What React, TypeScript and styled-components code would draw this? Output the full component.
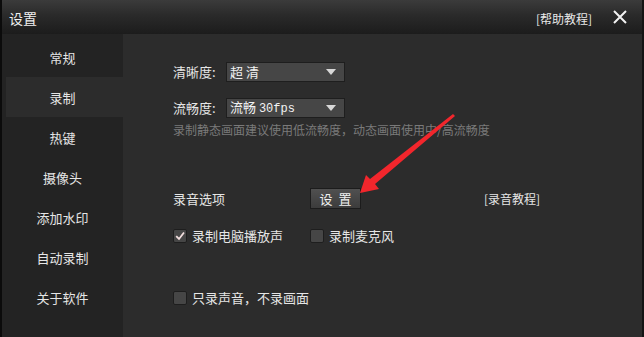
import React from "react";
import styled, { createGlobalStyle } from "styled-components";

const Global = createGlobalStyle`
  html, body { margin: 0; padding: 0; background: #1a1a1a; }
  body { font-family: "Noto Sans CJK SC", "Microsoft YaHei", sans-serif; }
`;

const Window = styled.div`
  position: relative;
  width: 644px;
  height: 337px;
  box-sizing: border-box;
  border-left: 2px solid #0b0b0b;
  border-right: 2px solid #141414;
  display: flex;
  flex-direction: column;
  overflow: hidden;
  background: #2c2c2c;
`;

const TitleBar = styled.div`
  height: 34px;
  flex: none;
  display: flex;
  align-items: center;
  padding: 0 0 0 7px;
  background: linear-gradient(#3b3b3b, #2a2a2a 45%, #1c1c1c);
  color: #f0f0f0;
  font-size: 14px;
`;

const Title = styled.div`
  flex: 1;
  padding-top: 2px;
`;

const HelpLink = styled.div`
  font-size: 12px;
  color: #e8e8e8;
  margin-right: 20px;
  padding-top: 2px;
`;

const Close = styled.div`
  width: 16px;
  height: 16px;
  margin-right: 14px;
  display: flex;
  align-items: center;
  justify-content: center;
`;

const Body = styled.div`
  flex: 1;
  display: flex;
`;

const Sidebar = styled.div`
  width: 121px;
  flex: none;
  background: #232323;
  padding-top: 3px;
  display: flex;
  flex-direction: column;
`;

const NavItem = styled.div<{ $active?: boolean }>`
  height: 40px;
  margin-left: 4px;
  display: flex;
  align-items: center;
  justify-content: center;
  padding-right: 4px;
  font-size: 13px;
  color: #e6e6e6;
  background: ${(p) => (p.$active ? "#2c2c2c" : "transparent")};
`;

const Content = styled.div`
  flex: 1;
  background: #2c2c2c;
  padding: 28px 0 0 50px;
  display: flex;
  flex-direction: column;
  font-size: 13px;
  line-height: 16px;
  color: #e6e6e6;
`;

const Row = styled.div<{ $mt?: number }>`
  display: flex;
  align-items: center;
  margin-top: ${(p) => p.$mt ?? 0}px;
`;

const Label = styled.div<{ $w?: number }>`
  width: ${(p) => (p.$w ? `${p.$w}px` : "auto")};
  flex: none;
`;

const TutorialLink = styled.div`
  margin-left: 123px;
  font-size: 12px;
`;

const Select = styled.div`
  width: 119px;
  height: 20px;
  box-sizing: border-box;
  background: #464646;
  border: 1px solid #1e1e1e;
  display: flex;
  align-items: center;
  padding: 0 8px 0 3px;
  color: #f2f2f2;
  font-size: 13px;
`;

const SelectText = styled.div`
  flex: 1;
  white-space: pre;
`;

const Mono = styled.span`
  font-family: "Liberation Mono", "DejaVu Sans Mono", monospace;
  font-size: 12px;
`;

const Caret = styled.div`
  width: 0;
  height: 0;
  border-left: 5px solid transparent;
  border-right: 5px solid transparent;
  border-top: 6px solid #d8d8d8;
`;

const Hint = styled.div`
  margin-top: 4px;
  font-size: 12px;
  color: #7a7a7a;
  line-height: 16px;
`;

const Button = styled.div`
  width: 51px;
  height: 21px;
  box-sizing: border-box;
  border: 1px solid #1c1c1c;
  background: linear-gradient(#505050, #3c3c3c);
  color: #f0f0f0;
  display: flex;
  align-items: center;
  justify-content: center;
  font-size: 13px;
  letter-spacing: 6px;
  padding-left: 6px;
`;

const Box = styled.div`
  width: 14px;
  height: 14px;
  box-sizing: border-box;
  border: 1px solid #1e1e1e;
  border-radius: 2px;
  background: #464646;
  margin-right: 5px;
  display: flex;
  align-items: center;
  justify-content: center;
  flex: none;
`;

const Check = styled.div<{ $w?: number }>`
  display: flex;
  align-items: center;
  width: ${(p) => (p.$w ? `${p.$w}px` : "auto")};
`;

const ArrowLayer = styled.svg`
  position: absolute;
  left: 0;
  top: 0;
  pointer-events: none;
`;

const CheckBox = ({ checked, label, w }: { checked?: boolean; label: string; w?: number }) => (
  <Check $w={w}>
    <Box>
      {checked && (
        <svg width="10" height="10" viewBox="0 0 10 10">
          <path d="M1.2 5.2 L4 8 L9 1.5" fill="none" stroke="#f2dede" strokeWidth="1.8" />
        </svg>
      )}
    </Box>
    {label}
  </Check>
);

const nav = ["常规", "录制", "热键", "摄像头", "添加水印", "自动录制", "关于软件"];

export default function App() {
  return (
    <>
      <Global />
      <Window>
        <TitleBar>
          <Title>设置</Title>
          <HelpLink>[帮助教程]</HelpLink>
          <Close>
            <svg width="14" height="14" viewBox="0 0 14 14">
              <path d="M1 1 L13 13 M13 1 L1 13" stroke="#f2f2f2" strokeWidth="2" />
            </svg>
          </Close>
        </TitleBar>
        <Body>
          <Sidebar>
            {nav.map((n) => (
              <NavItem key={n} $active={n === "录制"}>
                {n}
              </NavItem>
            ))}
          </Sidebar>
          <Content>
            <Row>
              <Label $w={53}>清晰度:</Label>
              <Select>
                <SelectText>超 清</SelectText>
                <Caret />
              </Select>
            </Row>
            <Row $mt={16}>
              <Label $w={53}>流畅度:</Label>
              <Select>
                <SelectText>
                  流畅 <Mono>30fps</Mono>
                </SelectText>
                <Caret />
              </Select>
            </Row>
            <Hint>录制静态画面建议使用低流畅度，动态画面使用中/高流畅度</Hint>
            <Row $mt={50}>
              <Label $w={137}>录音选项</Label>
              <Button>设置</Button>
              <TutorialLink>[录音教程]</TutorialLink>
            </Row>
            <Row $mt={19}>
              <CheckBox checked label="录制电脑播放声" w={137} />
              <CheckBox label="录制麦克风" />
            </Row>
            <Row $mt={46}>
              <CheckBox label="只录声音，不录画面" />
            </Row>
          </Content>
        </Body>
        <ArrowLayer width="644" height="337" viewBox="0 0 644 337">
          <polygon
            points="451,114 453,116 373,184 377,189 358,193 364,175 368,179"
            fill="#f2262c"
          />
        </ArrowLayer>
      </Window>
    </>
  );
}
